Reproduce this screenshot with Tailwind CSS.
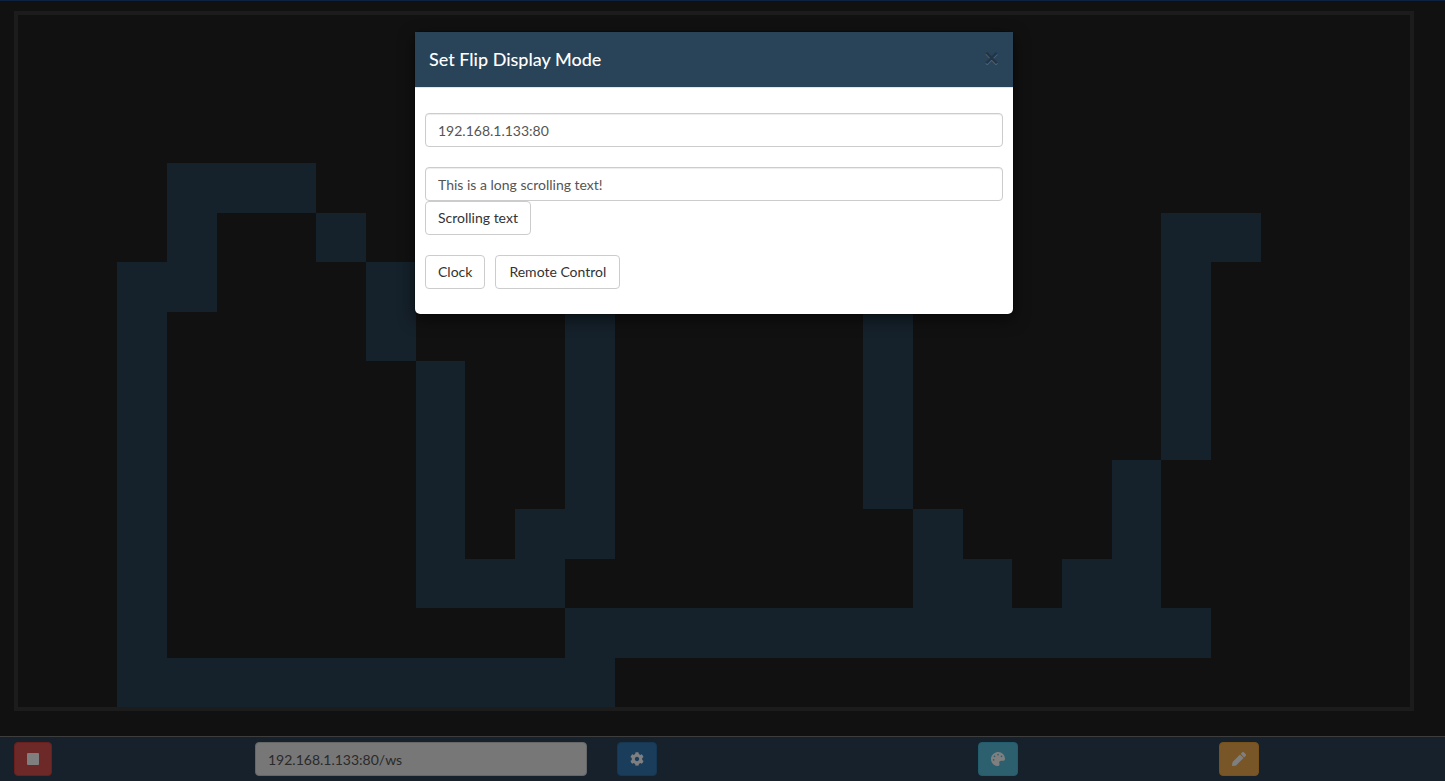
<!DOCTYPE html>
<html lang="en">
<head>
<meta charset="utf-8">
<title>Flip Display</title>
<script src="https://cdn.jsdelivr.net/npm/@tailwindcss/browser@4"></script>
</head>
<body class="relative flex h-screen flex-col overflow-hidden bg-[#222] font-['Lato',sans-serif] text-sm leading-5 text-[#333]">

<div class="h-px shrink-0 bg-[#1f4383]"></div>

<main class="mt-2.5 mr-[31px] mb-[25px] ml-3.5 flex min-h-0 flex-1 border-4 border-[#393939]">
  <svg class="block h-full w-full" viewBox="0 0 28 14" preserveAspectRatio="none" shape-rendering="crispEdges" fill="#2a4356" role="img" aria-label="Pixel display">
    <path d="M3 3h3v1h-3zM3 4h1v2h-1zM2 5h1v9h-1zM6 4h1v1h-1zM7 5h1v2h-1zM8 7h1v5h-1zM9 11h2v1h-2zM10 10h1v1h-1zM11 6h1v5h-1zM17 6h1v4h-1zM18 10h1v2h-1zM19 11h1v1h-1zM21 11h1v1h-1zM22 9h1v3h-1zM23 4h1v5h-1zM24 4h1v1h-1zM11 12h13v1h-13zM3 13h9v1h-9z"/>
  </svg>
</main>

<footer class="h-[45px] shrink-0 border-t border-[#7a7a7a] bg-[#2c4358] pt-[5px]">
  <div class="-ml-px grid grid-cols-12">
    <div class="col-span-2 px-[15px]">
      <button type="button" aria-label="Stop" class="flex h-[34px] w-[38px] items-center justify-center rounded border border-[#d43f3a] bg-[#d9534f] text-white">
        <svg class="size-3" viewBox="0 0 12 12" fill="currentColor"><rect width="12" height="12" rx="1"/></svg>
      </button>
    </div>
    <div class="col-span-3 px-[15px]">
      <input type="text" aria-label="Socket address" value="192.168.1.133:80/ws" class="block h-[34px] w-full rounded border border-[#ccc] bg-[#eee] px-3 text-[#555]">
    </div>
    <div class="col-span-3 px-[15px]">
      <button type="button" aria-label="Settings" class="flex h-[34px] w-10 items-center justify-center rounded border border-[#2e6da4] bg-[#337ab7] text-white">
        <svg class="size-3.5" viewBox="0 0 512 512" fill="currentColor"><path d="M487.4 315.7l-42.6-24.6c4.3-23.2 4.3-47 0-70.2l42.6-24.6c4.9-2.8 7.1-8.6 5.5-14-11.1-35.6-30-67.8-54.7-94.6-3.8-4.1-10-5.1-14.8-2.3L380.8 110c-17.9-15.4-38.5-27.3-60.8-35.1V25.8c0-5.6-3.9-10.5-9.4-11.7-36.7-8.2-74.3-7.8-109.2 0-5.5 1.2-9.4 6.1-9.4 11.7V75c-22.2 7.9-42.8 19.8-60.8 35.1L88.700 85.500c-4.900-2.800-11-1.900-14.800 2.300-24.700 26.700-43.600 58.900-54.700 94.600-1.700 5.400.6 11.200 5.500 14L67.300 221c-4.300 23.200-4.300 47 0 70.200l-42.600 24.600c-4.900 2.800-7.100 8.600-5.500 14 11.100 35.600 30 67.800 54.700 94.600 3.800 4.100 10 5.100 14.800 2.300l42.600-24.600c17.900 15.400 38.500 27.300 60.800 35.100v49.200c0 5.600 3.900 10.500 9.400 11.700 36.700 8.200 74.300 7.800 109.200 0 5.500-1.200 9.400-6.100 9.400-11.700v-49.200c22.200-7.900 42.800-19.800 60.800-35.100l42.600 24.600c4.900 2.800 11 1.900 14.800-2.300 24.700-26.700 43.600-58.900 54.700-94.600 1.500-5.500-.7-11.300-5.600-14.100zM256 336c-44.100 0-80-35.900-80-80s35.900-80 80-80 80 35.900 80 80-35.900 80-80 80z"/></svg>
      </button>
    </div>
    <div class="col-span-2 px-[15px]">
      <button type="button" aria-label="Colours" class="flex h-[34px] w-10 items-center justify-center rounded border border-[#46b8da] bg-[#5bc0de] text-white">
        <svg class="size-3.5" viewBox="0 0 512 512" fill="currentColor"><path d="M204.300 5C104.900 24.400 24.800 104.300 5.200 203.400c-37 187 131.700 326.400 258.800 306.700 41.200-6.400 61.400-54.600 42.500-91.700-23.100-45.400 9.900-98.400 60.900-98.400h79.700c35.800 0 64.800-29.600 64.900-65.300C511.500 97.100 368.100-26.900 204.300 5zM96 320c-17.700 0-32-14.300-32-32s14.300-32 32-32 32 14.300 32 32-14.300 32-32 32zm32-128c-17.700 0-32-14.300-32-32s14.300-32 32-32 32 14.300 32 32-14.300 32-32 32zm128-64c-17.700 0-32-14.300-32-32s14.300-32 32-32 32 14.300 32 32-14.300 32-32 32zm128 64c-17.700 0-32-14.300-32-32s14.300-32 32-32 32 14.300 32 32-14.300 32-32 32z"/></svg>
      </button>
    </div>
    <div class="col-span-2 px-[15px]">
      <button type="button" aria-label="Draw" class="flex h-[34px] w-10 items-center justify-center rounded border border-[#eea236] bg-[#f0ad4e] text-white">
        <svg class="size-3.5" viewBox="0 0 512 512" fill="currentColor"><path d="M497.900 142.100l-46.100 46.100c-4.700 4.700-12.300 4.700-17 0l-111-111c-4.700-4.700-4.700-12.300 0-17l46.100-46.100c18.700-18.700 49.100-18.700 67.900 0l60.100 60.100c18.800 18.700 18.800 49.100 0 67.900zM284.200 99.800L21.600 362.400.4 483.900c-2.900 16.400 11.400 30.600 27.800 27.800l121.500-21.300 262.600-262.600c4.700-4.700 4.700-12.300 0-17l-111-111c-4.800-4.700-12.400-4.700-17.100 0z"/></svg>
      </button>
    </div>
  </div>
</footer>

<div class="absolute inset-0 bg-black/50 pt-[31px] pr-[17px]">
  <section role="dialog" aria-modal="true" aria-labelledby="dialog-title" class="mx-auto w-[600px] max-w-full rounded-md border border-black/20 bg-white bg-clip-padding shadow-[0_5px_15px_rgba(0,0,0,0.5)]">
    <header class="flex h-14 items-center justify-between border-b border-[#e5e5e5] bg-[#294358] px-3.5 pb-0.5">
      <h4 id="dialog-title" class="text-lg font-medium text-white">Set Flip Display Mode</h4>
      <button type="button" aria-label="Close" class="pb-1 text-[26px] leading-none font-bold text-black opacity-20 [text-shadow:0_1px_0_#fff]">×</button>
    </header>
    <form class="px-2.5 pt-[25px] pb-[25px]">
      <input type="text" aria-label="Display address" value="192.168.1.133:80" class="mb-5 block h-[34px] w-full rounded border border-[#ccc] px-3 text-[#555] shadow-[inset_0_1px_1px_rgba(0,0,0,0.075)]">
      <input type="text" aria-label="Scrolling text" value="This is a long scrolling text!" class="block h-[34px] w-full rounded border border-[#ccc] px-3 text-[#555] shadow-[inset_0_1px_1px_rgba(0,0,0,0.075)]">
      <button type="button" class="mb-5 block h-[34px] rounded border border-[#ccc] bg-white px-3">Scrolling text</button>
      <div class="flex gap-2.5">
        <button type="button" class="h-[34px] rounded border border-[#ccc] bg-white px-3">Clock</button>
        <button type="button" class="h-[34px] rounded border border-[#ccc] bg-white px-[13px]">Remote Control</button>
      </div>
    </form>
  </section>
</div>

</body>
</html>
